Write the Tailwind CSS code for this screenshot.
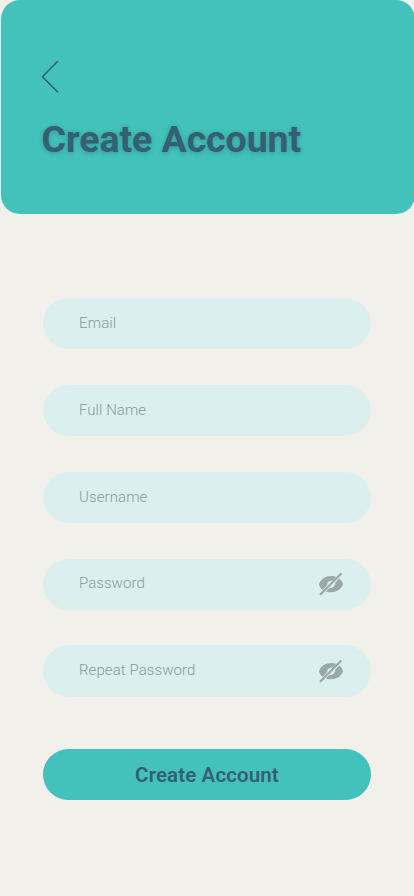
<!DOCTYPE html>
<html lang="en">
<head>
<meta charset="utf-8">
<meta name="viewport" content="width=device-width, initial-scale=1">
<title>Create Account</title>
<script src="https://cdn.jsdelivr.net/npm/@tailwindcss/browser@4"></script>
</head>
<body class="bg-[#f2f0eb] font-[Roboto,sans-serif] overflow-hidden">
<svg class="hidden">
  <symbol id="eye-off" viewBox="0 0 26 24">
    <g fill="#9aa9a7">
      <path d="M1 12.300C2.500 7.300 7.500 4.100 13 4.100c2 0 3.600.3 5.200 1L14.700 8.600C11 8.600 9 10.300 9 13.300L4.800 18.100C2.800 16.600 1.500 14.600 1 12.300Z"/>
      <path d="M21.300 6.500C23.200 8 24.500 10 25 12.300 23.500 17.300 18.500 20.300 13 20.300c-2 0-3.600-.3-5.200-.9l3.500-3.500C15 16.300 17.500 13.800 17.300 10.500Z"/>
    </g>
    <path d="M2.600 22.200 22.800 2" stroke="#9aa9a7" stroke-width="2.200" stroke-linecap="round"/>
  </symbol>
</svg>
<main class="w-[414px] h-[896px] flex flex-col">
  <header class="ml-px w-[414px] h-[214.300px] shrink-0 rounded-[19px] bg-[#43c1bb] pl-[40px] pt-[60px] text-[#355f73]">
    <button class="block" aria-label="Back"><svg class="block w-[18px] h-[34px]" viewBox="0 0 18 34" fill="none"><path d="M16.500 1.500 1.400 16.700 16.500 31.800" stroke="currentColor" stroke-width="1.600" stroke-linecap="round" stroke-linejoin="round"/></svg></button>
    <h1 class="mt-[21px] pl-[0.500px] text-[37.500px] leading-[48px] font-bold tracking-[-0.070px] whitespace-nowrap [text-shadow:0_1px_5px_#00000038]">Create Account</h1>
  </header>
  <form class="mx-[43px] mt-[83.850px] flex flex-col">
    <div class="flex flex-col gap-[35.500px] text-[15px] font-light text-[#879a99]">
      <label class="h-[51.300px] rounded-full bg-[#dbf0ee] pl-9 pr-[27px] pb-px flex items-center"><span class="tracking-[0.150px]">Email</span></label>
      <label class="h-[51.300px] rounded-full bg-[#dbf0ee] pl-9 pr-[27px] pb-px flex items-center"><span class="tracking-[0.050px]">Full Name</span></label>
      <label class="h-[51.300px] rounded-full bg-[#dbf0ee] pl-9 pr-[27px] flex items-center"><span class="tracking-[0.100px]">Username</span></label>
      <label class="h-[51.300px] rounded-full bg-[#dbf0ee] pl-9 pr-[27px] flex items-center justify-between"><span class="pb-[2px] tracking-[0.050px]">Password</span><svg class="w-[26px] h-[24px]"><use href="#eye-off"/></svg></label>
      <label class="h-[51.300px] rounded-full bg-[#dbf0ee] pl-9 pr-[27px] flex items-center justify-between"><span class="pb-[2px] tracking-[0.080px]">Repeat Password</span><svg class="w-[26px] h-[24px]"><use href="#eye-off"/></svg></label>
    </div>
    <button type="button" class="mt-[52.600px] h-[51px] rounded-full bg-[#43c1bb] text-[#355f73] text-[20.500px] font-semibold tracking-[0.120px] pt-[1px]">Create Account</button>
  </form>
</main>
</body>
</html>
